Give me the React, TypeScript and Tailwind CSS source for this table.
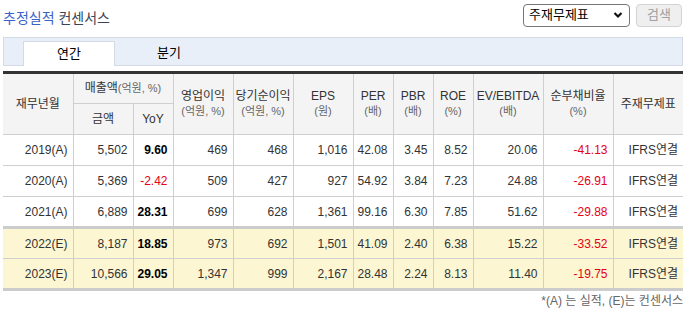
import React from "react";

type Row = {
  y: string; sales: string; yoy: string; op: string; net: string; eps: string;
  per: string; pbr: string; roe: string; ev: string; debt: string; est: boolean;
};

const rows: Row[] = [
  { y: "2019(A)", sales: "5,502", yoy: "9.60", op: "469", net: "468", eps: "1,016", per: "42.08", pbr: "3.45", roe: "8.52", ev: "20.06", debt: "-41.13", est: false },
  { y: "2020(A)", sales: "5,369", yoy: "-2.42", op: "509", net: "427", eps: "927", per: "54.92", pbr: "3.84", roe: "7.23", ev: "24.88", debt: "-26.91", est: false },
  { y: "2021(A)", sales: "6,889", yoy: "28.31", op: "699", net: "628", eps: "1,361", per: "99.16", pbr: "6.30", roe: "7.85", ev: "51.62", debt: "-29.88", est: false },
  { y: "2022(E)", sales: "8,187", yoy: "18.85", op: "973", net: "692", eps: "1,501", per: "41.09", pbr: "2.40", roe: "6.38", ev: "15.22", debt: "-33.52", est: true },
  { y: "2023(E)", sales: "10,566", yoy: "29.05", op: "1,347", net: "999", eps: "2,167", per: "28.48", pbr: "2.24", roe: "8.13", ev: "11.40", debt: "-19.75", est: true },
];

const font = { fontFamily: '"Liberation Sans", "Noto Sans CJK KR", sans-serif' };

export default function App() {
  const th = "border-l border-b border-[#cfcfcf] bg-[#f4f4f4] font-normal text-[12px] text-[#333] align-middle leading-[15px]";
  const sub = "block text-[11px] text-[#666]";
  return (
    <div className="w-[689px] h-[310px] bg-white pl-[3px] pr-[6px]" style={font}>
      <div className="flex items-center justify-between h-[35px]">
        <div className="text-[14px] leading-[18px] pt-[1px]">
          <span className="text-[#3a62c8]">추정실적</span>{" "}
          <span className="text-[#3c4454]">컨센서스</span>
        </div>
        <div className="flex items-center gap-[6px] mr-[1px] mt-[-5px]">
          <div className="w-[107px] h-[23px] border border-[#767676] rounded-[4px] flex items-center justify-between pl-[5px] pr-[6px] text-[13px] text-black bg-white">
            <span>주재무제표</span>
            <svg width="10" height="8" viewBox="0 0 10 8"><path d="M1.5 2 L5 5.5 L8.5 2" fill="none" stroke="#111" strokeWidth="2.2" /></svg>
          </div>
          <div className="w-[46px] h-[23px] border border-[#d3d3d3] rounded-[4px] bg-[#efefef] flex items-center justify-center text-[13px] text-[#a0a0a0]">검색</div>
        </div>
      </div>
      <div className="mt-[2px] h-[29px] w-[680px] border border-[#d3dae6] bg-[#e9eff9] flex items-end pl-[19px]">
        <div className="w-[92px] h-[25px] bg-white border border-b-0 border-[#d3dae6] flex items-center justify-center text-[13px] text-black mb-[-1px]">연간</div>
        <div className="w-[108px] h-[25px] flex items-center justify-center text-[13px] text-black">분기</div>
      </div>
      <table className="mt-[5px] w-[680px] border-collapse table-fixed">
        <colgroup>
          <col className="w-[70px]" /><col className="w-[60px]" /><col className="w-[40px]" />
          <col className="w-[60px]" /><col className="w-[60px]" /><col className="w-[60px]" />
          <col className="w-[40px]" /><col className="w-[40px]" /><col className="w-[40px]" />
          <col className="w-[70px]" /><col className="w-[70px]" /><col className="w-[70px]" />
        </colgroup>
        <thead>
          <tr className="h-[31px]">
            <th rowSpan={2} className={th + " border-l-0 border-t-[3px] border-t-[#333]"}>재무년월</th>
            <th colSpan={2} className={th + " border-t-[3px] border-t-[#333]"}>
              매출액<span className="text-[11px] text-[#666]">(억원, %)</span>
            </th>
            <th rowSpan={2} className={th + " border-t-[3px] border-t-[#333]"}>영업이익<span className={sub}>(억원, %)</span></th>
            <th rowSpan={2} className={th + " border-t-[3px] border-t-[#333]"}>당기순이익<span className={sub}>(억원, %)</span></th>
            <th rowSpan={2} className={th + " border-t-[3px] border-t-[#333]"}>EPS<span className={sub}>(원)</span></th>
            <th rowSpan={2} className={th + " border-t-[3px] border-t-[#333]"}>PER<span className={sub}>(배)</span></th>
            <th rowSpan={2} className={th + " border-t-[3px] border-t-[#333]"}>PBR<span className={sub}>(배)</span></th>
            <th rowSpan={2} className={th + " border-t-[3px] border-t-[#333]"}>ROE<span className={sub}>(%)</span></th>
            <th rowSpan={2} className={th + " border-t-[3px] border-t-[#333]"}>EV/EBITDA<span className={sub}>(배)</span></th>
            <th rowSpan={2} className={th + " border-t-[3px] border-t-[#333]"}>순부채비율<span className={sub}>(%)</span></th>
            <th rowSpan={2} className={th + " border-t-[3px] border-t-[#333]"}>주재무제표</th>
          </tr>
          <tr className="h-[31px]">
            <th className={th}>금액</th>
            <th className={th}>YoY</th>
          </tr>
        </thead>
        <tbody>
          {rows.map((r, i) => {
            const bg = r.est ? "bg-[#fcf6d3]" : "bg-white";
            const sep = i === 3 ? " border-t-[3px] border-t-[#cccccc]" : "";
            const last = i === rows.length - 1 ? " border-b-[3px] border-b-[#cccccc]" : "";
            const td = `border-l border-b border-[#cfcfcf] text-[12px] text-[#333] text-right pr-[5px] ${bg}${sep}${last}`;
            const neg = (v: string) => v.startsWith("-");
            return (
              <tr key={r.y} className="h-[31px]">
                <td className={td + " border-l-0 text-center pr-0"}>{r.y}</td>
                <td className={td}>{r.sales}</td>
                <td className={td + (neg(r.yoy) ? " !text-[#e60012]" : " font-bold !text-black")}>{r.yoy}</td>
                <td className={td}>{r.op}</td>
                <td className={td}>{r.net}</td>
                <td className={td}>{r.eps}</td>
                <td className={td}>{r.per}</td>
                <td className={td}>{r.pbr}</td>
                <td className={td}>{r.roe}</td>
                <td className={td}>{r.ev}</td>
                <td className={td + (neg(r.debt) ? " !text-[#e60012]" : "")}>{r.debt}</td>
                <td className={td + " text-center pr-0"}>IFRS연결</td>
              </tr>
            );
          })}
        </tbody>
      </table>
      <div className="w-[680px] text-right text-[12px] text-[#666] mt-[3px] leading-[15px]">*(A) 는 실적, (E)는 컨센서스</div>
    </div>
  );
}
